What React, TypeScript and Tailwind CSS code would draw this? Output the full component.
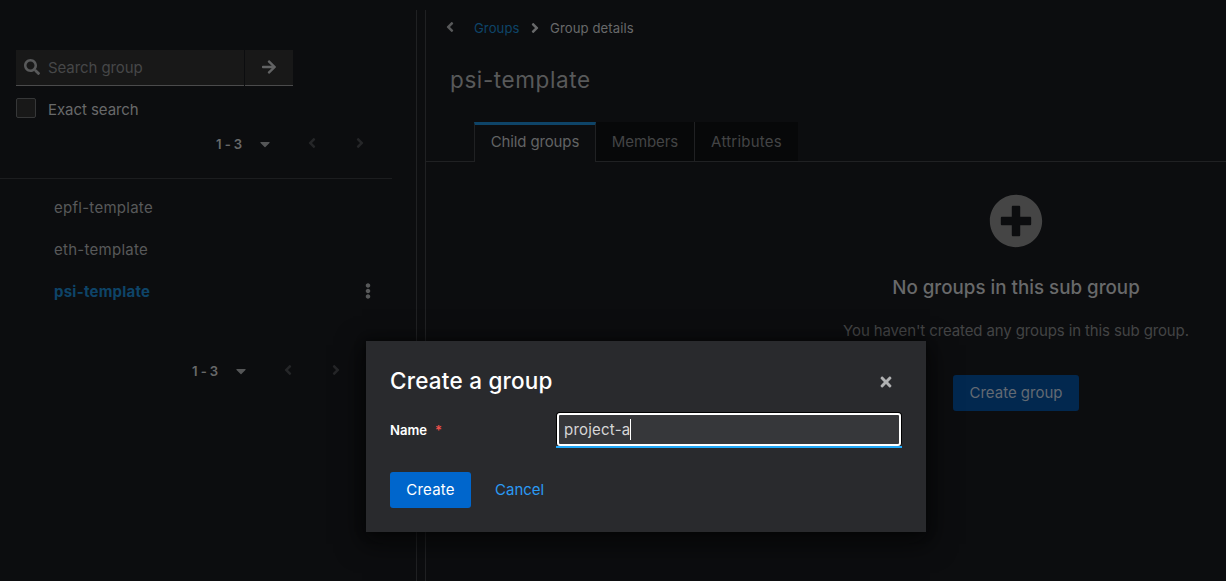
import type { ReactNode } from "react";
import { FaSearch, FaArrowRight, FaCaretDown, FaAngleLeft, FaAngleRight, FaEllipsisV, FaPlusCircle, FaTimes } from "react-icons/fa";

function Pagination({ className }: { className: string }) {
  return (
    <div className={`flex h-9 items-center text-[#555657] ${className}`}>
      <span className="w-[44px] pt-px text-[13.125px] font-semibold tracking-[-0.1px] whitespace-nowrap text-[#68696a]">1 - 3</span>
      <FaCaretDown className="mb-px w-[10px] text-[16px]" />
      <FaAngleLeft className="mb-[2px] ml-[37px] w-[10px] text-[16px] text-[#252628]" />
      <FaAngleRight className="mb-[2px] ml-[38px] w-[10px] text-[16px] text-[#252628]" />
    </div>
  );
}

function TreeItem({ children, selected }: { children: ReactNode; selected?: boolean }) {
  return (
    <li className="flex h-[42px] items-center pr-[19px] pl-[54px]">
      <span className={selected ? "flex-1 font-bold tracking-[0.24px] text-[#0e4468]" : "flex-1 tracking-[0.27px] text-[#58595a]"}>{children}</span>
      {selected && <FaEllipsisV className="mb-[2px] w-[10px] text-[16px] text-[#58595a]" />}
    </li>
  );
}

function Sidebar() {
  return (
    <aside className="w-[416px] shrink-0 pt-10">
      <div className="ml-4 flex h-9 gap-px">
        <div className="flex w-[228px] items-center gap-2 border-b border-[#4b4b4c] bg-[#181818] pl-2">
          <FaSearch className="mb-px text-[16px] text-[#58595a]" />
          <span className="pt-px tracking-[-0.08px] text-[#464748]">Search group</span>
        </div>
        <button className="flex w-12 items-center justify-center border-b border-[#4b4b4c] bg-[#181818]">
          <FaArrowRight className="mb-[2px] text-[16px] text-[#626364]" />
        </button>
      </div>
      <label className="mt-3 ml-4 flex h-6 items-center">
        <span className="mr-3 mb-1 size-5 rounded-[2px] border border-[#363738] bg-[#181818]" />
        <span className="tracking-[-0.06px] text-[#68696a]">Exact search</span>
      </label>
      <Pagination className="mt-[4px] pl-[216px]" />
      <div className="mt-4 mr-6 h-px bg-[#1c1d1f]" />
      <ul className="mt-2 mr-6">
        <TreeItem>epfl-template</TreeItem>
        <TreeItem>eth-template</TreeItem>
        <TreeItem selected>psi-template</TreeItem>
      </ul>
      <Pagination className="mt-10 pl-[192px]" />
    </aside>
  );
}

function Details() {
  return (
    <main className="flex-1 border-l border-[#202123]">
      <nav className="ml-4 flex h-9 items-center text-[13.125px]">
        <FaAngleLeft className="mb-[2px] w-4 text-[16px] text-[#58595a]" />
        <span className="ml-4 w-[46px] pt-px tracking-[0.08px] text-[#0e4468]">Groups</span>
        <FaAngleRight className="mb-px ml-[9px] w-3 text-[16px] text-[#68696a]" />
        <span className="ml-[9px] pt-px tracking-[0.1px] text-[#68696a]">Group details</span>
      </nav>
      <h1 className="mt-4 ml-6 text-[22.5px] leading-[36px] tracking-[0.6px] text-[#58595a]">psi-template</h1>
      <div className="mt-6 flex h-10 text-[#434445]">
        <div className="w-12 border-b border-[#202123]" />
        <button className="w-[122px] border-x border-t-[3px] border-x-[#202123] border-t-[#0e4468] pb-[3px] tracking-[-0.14px] text-[#626364]">Child groups</button>
        <button className="w-[99px] border-r border-b border-[#202123] bg-[#070809] pt-px tracking-[-0.07px]">Members</button>
        <button className="w-[103px] border-b border-[#202123] bg-[#070809] pt-px tracking-[0.23px]">Attributes</button>
        <div className="flex-1 border-b border-[#202123]" />
      </div>
      <section className="ml-[380px] flex flex-col items-center pt-8 text-center">
        <FaPlusCircle className="text-[54px] text-[#454545]" />
        <h2 className="mt-[25px] text-[18.75px] leading-[30px] font-medium whitespace-nowrap text-[#68696a]">No groups in this sub group</h2>
        <p className="mt-4 leading-6 tracking-[-0.12px] whitespace-nowrap text-[#434445]">You haven't created any groups in this sub group.</p>
        <button className="mt-8 h-9 w-[126px] rounded-[3px] bg-[#02284f] text-[#636a73]">Create group</button>
      </section>
    </main>
  );
}

function CreateDialog() {
  return (
    <div role="dialog" className="absolute top-[341px] left-[366px] h-[191px] w-[560px] bg-[#292a2d] px-6 pt-6 shadow-[0_8px_24px_4px_rgba(3,3,3,0.6),0_0_8px_rgba(3,3,3,0.5)]">
      <header className="flex h-8 items-center justify-between pr-[10px]">
        <h2 className="text-[22.5px] font-medium tracking-[0.22px] text-white">Create a group</h2>
        <FaTimes className="mt-[2px] w-3 text-[16px] text-[#b0b1b2]" />
      </header>
      <div className="mt-[15px] flex h-9 items-center">
        <label className="w-[166px] pt-px text-[13.125px] font-semibold text-white">
          Name<span className="ml-2 text-[#f0504a]">*</span>
        </label>
        <div className="h-9 w-[346px] border-b-2 border-[#1fa7f8]">
          <div className="h-[34px] rounded-[4px] border border-b-0 border-black">
            <div className="flex h-full items-center rounded-[3px] border-2 border-white bg-[#36373a] pl-[5px]">
              <span className="w-[66px] pt-px tracking-[0.22px] whitespace-nowrap text-[#d6d6d7]">project-a</span>
              <span className="h-[21px] w-px bg-white" />
            </div>
          </div>
        </div>
      </div>
      <footer className="mt-6 flex h-9 items-center">
        <button className="h-9 w-[81px] rounded-[3px] bg-[#0066cc] tracking-[0.2px] text-white">Create</button>
        <button className="ml-6 text-[#2b9af3]">Cancel</button>
      </footer>
    </div>
  );
}

export default function App() {
  return (
    <div className="relative h-[581px] w-[1226px] overflow-hidden bg-[#0c0d0f] pt-[10px] font-['Inter',sans-serif] text-[15px]">
      <div className="flex h-full">
        <Sidebar />
        <div className="w-[9px] shrink-0 border-l border-[#202123]" />
        <Details />
      </div>
      <CreateDialog />
    </div>
  );
}
